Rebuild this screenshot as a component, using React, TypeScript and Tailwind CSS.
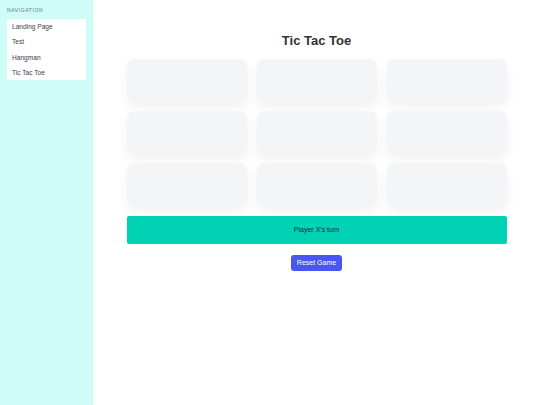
export default function App() {
  const cells = Array.from({ length: 9 })
  return (
    <div className="flex min-h-[405px] font-['Liberation_Sans',Arial,sans-serif]">
      <aside className="w-[93px] shrink-0 bg-[#cefcf6] px-[7px] pt-[8px]">
        <div className="text-[5px] tracking-[0.6px] text-[#6b7280] uppercase leading-[5px]">Navigation</div>
        <ul className="mt-[6px] bg-white">
          {["Landing Page", "Test", "Hangman", "Tic Tac Toe"].map((n) => (
            <li key={n} className="h-[15.25px] px-[5px] text-[6.6px] leading-[15.25px] text-[#374151]">
              {n}
            </li>
          ))}
        </ul>
      </aside>
      <main className="flex-1 bg-white flex flex-col items-center pt-[33px]">
        <h1 className="text-[13px] font-bold leading-[16px] text-[#333]">Tic Tac Toe</h1>
        <div className="mt-[10px] grid w-[380px] grid-cols-3 gap-x-[10px] gap-y-[10px]">
          {cells.map((_, i) => (
            <div
              key={i}
              className="h-[42px] rounded-[7px] bg-[#f3f5f6] shadow-[0_6px_12px_rgba(0,0,0,0.06)]"
            />
          ))}
        </div>
        <div className="mt-[11px] flex h-[28px] w-[380px] items-center justify-center rounded-[2px] bg-[#00d2b3] text-[7px] text-[#1f2937]">
          Player X's turn
        </div>
        <button className="mt-[11px] h-[16px] w-[51px] rounded-[3px] bg-[#4a56f3] text-[7px] text-white">
          Reset Game
        </button>
      </main>
    </div>
  )
}
